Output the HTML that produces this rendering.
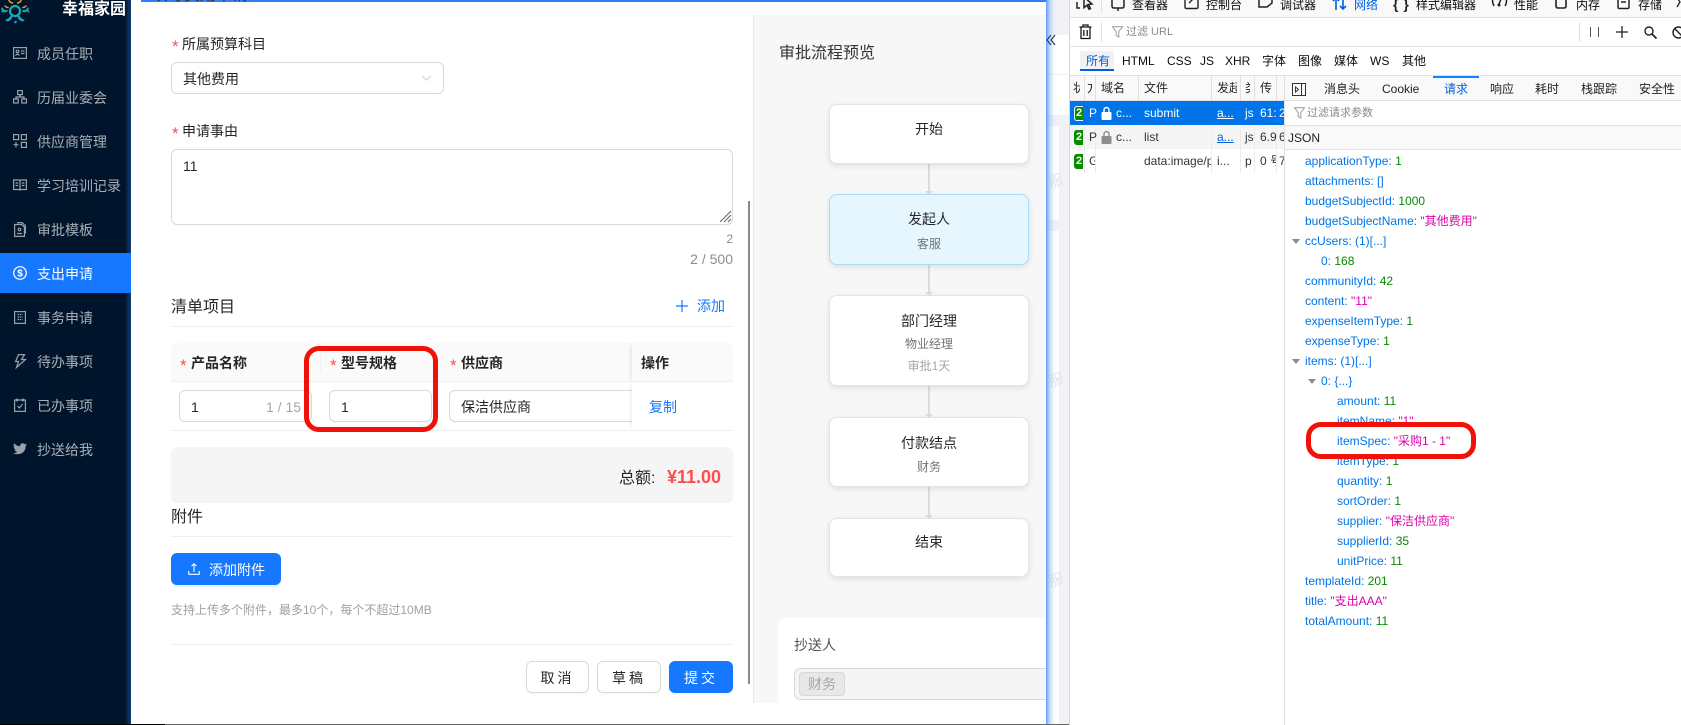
<!DOCTYPE html>
<html lang="zh"><head><meta charset="utf-8"><title>支出申请</title>
<style>
html,body{margin:0;padding:0;width:1681px;height:725px;overflow:hidden;background:#f0f2f5}
body{position:relative;font-family:"Liberation Sans","Noto Sans CJK SC",sans-serif;font-size:14px;color:#262626}
.t{position:absolute;white-space:nowrap;line-height:20px;height:20px}
.b{position:absolute;box-sizing:border-box}
svg{position:absolute;overflow:visible}
.m{color:rgba(255,255,255,.65);left:37px}
.ic{fill:none;stroke:rgba(255,255,255,.6);stroke-width:1.2}
.star{color:#ff4d4f;font-size:17px}
.in{border:1px solid #d9d9d9;border-radius:6px;background:#fff}
.line{background:#f0f0f0;height:1px}
.btn{border:1px solid #d9d9d9;border-radius:6px;background:#fff;text-align:center;line-height:32px;letter-spacing:3px;box-shadow:0 2px 0 rgba(0,0,0,.02)}
.node{border:1px solid #e4e4e4;border-radius:8px;background:#fff;left:829px;width:200px;box-shadow:0 2px 6px rgba(0,0,0,.1)}
.c{text-align:center;left:829px;width:200px}
.conn{background:#dcdcdc;width:2px;left:928px}
.arr{position:absolute;left:925px;width:0;height:0;border-left:4px solid transparent;border-right:4px solid transparent;border-top:4px solid #d9d9d9;z-index:3}
.d{font-size:12px;color:#0c0c0d}
.k{color:#0074e8;font-size:12px}
.n{color:#058b00}.s{color:#dd00a9}
.tri{position:absolute;width:0;height:0;border-left:4px solid transparent;border-right:4px solid transparent;border-top:5px solid #8c8c8c}
.red{position:absolute;box-sizing:border-box;border:5px solid #f01208;z-index:20}
.cell{position:absolute;top:76px;height:25px;width:1px;background:#e0e0e2}
.r{font-size:12px;line-height:24px;height:24px}
</style></head><body>

<!-- background page behind modal -->
<div class="b" style="left:1046px;top:35px;width:23px;height:39px;background:#fff"></div>
<div class="b" style="left:1046px;top:74px;width:23px;height:41px;background:#fff;border-top:1px solid #eee"></div>
<div class="b" style="left:1046px;top:126px;width:13px;height:94px;background:#fff"></div>
<div class="b" style="left:1046px;top:231px;width:13px;height:494px;background:#fff"></div>
<div class="t" style="left:1049px;top:172px;color:#e6e6e6;transform:rotate(-20deg);font-size:15px">服</div>
<div class="t" style="left:1049px;top:371px;color:#e6e6e6;transform:rotate(-20deg);font-size:15px">服</div>
<div class="t" style="left:1049px;top:571px;color:#e6e6e6;transform:rotate(-20deg);font-size:15px">服</div>

<!-- modal -->
<div class="b" style="left:131px;top:0;width:915px;height:724px;background:#fff"></div>
<div class="b" style="left:1046px;top:0;width:10px;height:724px;background:linear-gradient(90deg,#5c9cff,rgba(140,185,255,.55) 35%,rgba(200,225,255,.15) 80%,rgba(255,255,255,0));z-index:2"></div>
<svg style="left:1046px;top:34px;z-index:3" width="10" height="12" viewBox="0 0 10 12"><path d="M5 1L1 6l4 5M9 1L5 6l4 5" fill="none" stroke="#33405c" stroke-width="1.300"/></svg>
<div class="b" style="left:141px;top:0;width:905px;height:2px;background:#2f80f5"></div>

<!-- sidebar -->
<div class="b" style="left:0;top:0;width:131px;height:725px;background:linear-gradient(90deg,#00152b 0,#00152b 125px,#0f3f78 131px)"></div>
<div class="b" style="left:0;top:253px;width:131px;height:40px;background:#1677ff"></div>
<svg style="left:0;top:0" width="32" height="26" viewBox="0 0 32 26"><circle cx="15" cy="11" r="5" fill="none" stroke="#1ba9bb" stroke-width="2.200"/>
<path d="M2 7q2 4 6 3l-1 2q-4 1-6-3zM28 7q-2 4-6 3l1 2q4 1 6-3zM5 20q4-1 6-5l1.500 1.500q-1 4-5 5zM25 20q-4-1-6-5l-1.500 1.500q1 4 5 5z" fill="#1ba9bb"/>
<circle cx="2.500" cy="11.500" r="1" fill="#1ba9bb"/><circle cx="28.500" cy="11.500" r="1" fill="#1ba9bb"/><circle cx="15.500" cy="22" r="1.300" fill="#1ba9bb"/>
<g fill="none" stroke="#e3a21a" stroke-width="1.500" stroke-linecap="round"><path d="M9 0.500q1 2 3.500 2.500M21 0.500q-1 2-3.500 2.500M5 6q1.500 1.500 3 1.500M26 6q-1.500 1.500-3 1.500"/></g></svg>
<div class="t" style="left:62px;top:0;font-size:16px;font-weight:700;color:#fff">幸福家园</div>

<div class="t m" style="top:44px">成员任职</div>
<svg style="left:13px;top:47px" width="14" height="12" class="ic" viewBox="0 0 14 12"><rect x=".6" y=".6" width="12.8" height="10.8"/><circle cx="4.5" cy="4.5" r="1.3"/><path d="M2.500 8.500q2-2.500 4 0M8 4h3.500M8 6.500h3.500"/></svg>
<div class="t m" style="top:88px">历届业委会</div>
<svg style="left:13px;top:90px" width="14" height="14" class="ic" viewBox="0 0 14 14"><rect x="4.7" y=".6" width="4.6" height="4"/><rect x=".6" y="9" width="4.6" height="4"/><rect x="8.8" y="9" width="4.6" height="4"/><path d="M7 4.600v2.400M3 9V7h8v2"/></svg>
<div class="t m" style="top:132px">供应商管理</div>
<svg style="left:13px;top:134px" width="14" height="14" class="ic" viewBox="0 0 14 14"><rect x=".6" y=".6" width="5" height="5"/><rect x="8.4" y=".6" width="5" height="5"/><rect x="8.4" y="8.4" width="5" height="5"/><path d="M3 8v5.500M.5 10.700h5"/></svg>
<div class="t m" style="top:176px">学习培训记录</div>
<svg style="left:13px;top:179px" width="14" height="12" class="ic" viewBox="0 0 14 12"><path d="M.6 1h5.400q1 0 1 1 0-1 1-1h5.400v9.500H8q-1 0-1 1 0-1-1-1H.6zM7 2v9M2.500 4h2.700M2.500 6.500h2.700M8.800 4h2.700M8.800 6.500h2.700"/></svg>
<div class="t m" style="top:220px">审批模板</div>
<svg style="left:14px;top:222px" width="12" height="15" class="ic" viewBox="0 0 12 15"><path d="M.6 2.500h7l2.800 2.500v9.400H.6zM3 .6h5l3.400 3v8"/><circle cx="5.500" cy="7.500" r="1.300"/><path d="M3 11.500h5"/></svg>
<div class="t" style="left:37px;top:264px;color:#fff">支出申请</div>
<svg style="left:13px;top:266px" width="14" height="14" viewBox="0 0 14 14"><circle cx="7" cy="7" r="6.300" fill="none" stroke="#fff" stroke-width="1.200"/><text x="7" y="10.500" text-anchor="middle" font-size="10" font-weight="700" fill="#fff">$</text></svg>
<div class="t m" style="top:308px">事务申请</div>
<svg style="left:14px;top:311px" width="12" height="13" class="ic" viewBox="0 0 12 13"><rect x=".6" y=".6" width="10.800" height="11.800"/><path d="M3.500 3.500h5M3.500 6h5M3.500 8.500h5" stroke-dasharray="1.500 .7"/></svg>
<div class="t m" style="top:352px">待办事项</div>
<svg style="left:15px;top:354px" width="11" height="14" class="ic" viewBox="0 0 11 14"><path d="M3.500.6h6L6.500 5.500h4L1.500 13.500l2-6H.6z"/></svg>
<div class="t m" style="top:396px">已办事项</div>
<svg style="left:14px;top:398px" width="12" height="14" class="ic" viewBox="0 0 12 14"><rect x=".6" y="2" width="10.800" height="11.400"/><path d="M3 .5v3M9 .5v3M3.500 8l2 2 3-4"/></svg>
<div class="t m" style="top:440px">抄送给我</div>
<svg style="left:13px;top:443px" width="14" height="12" viewBox="0 0 14 12"><path d="M14 1.500l-1.600.4 1.300-1.500-1.800.7A2.900 2.900 0 0 0 7 3.300C4.600 3.200 2.500 2 1 .3c-.8 1.400-.4 3 .9 3.900L.6 3.800c0 1.400 1 2.600 2.300 2.900l-1.300.1c.4 1.200 1.400 2 2.700 2-1.200 1-2.700 1.400-4.300 1.300C6 13 13 10 12.600 3z" fill="rgba(255,255,255,.6)"/></svg>
<div class="b" style="left:0;top:724px;width:165px;height:1px;background:#000"></div>
<div class="b" style="left:165px;top:724px;width:904px;height:1px;background:#666"></div>

<!-- modal title clipped -->
<div style="position:absolute;left:141px;top:0;width:300px;height:4px;overflow:hidden;z-index:2"><div class="t" style="left:11px;top:-14px;font-size:16px;color:#333">填写费用申请</div></div>

<!-- form -->
<div class="t star" style="left:172px;top:37px">*</div>
<div class="t" style="left:182px;top:34px">所属预算科目</div>
<div class="b in" style="left:171px;top:62px;width:273px;height:32px"></div>
<div class="t" style="left:183px;top:69px">其他费用</div>
<svg style="left:421px;top:75px" width="11" height="6" viewBox="0 0 12 7"><path d="M1 1l5 5 5-5" fill="none" stroke="#c4c4c4" stroke-width="1"/></svg>

<div class="t star" style="left:172px;top:124px">*</div>
<div class="t" style="left:182px;top:121px">申请事由</div>
<div class="b in" style="left:171px;top:149px;width:562px;height:76px"></div>
<div class="t" style="left:183px;top:156px">11</div>
<svg style="left:718px;top:209px" width="14" height="14" viewBox="0 0 14 14"><path d="M2 13L13 2M6 13l7-7M10 13l3-3" stroke="#666" fill="none"/></svg>
<div class="t" style="left:723px;top:229px;font-size:12px;color:#8c8c8c;width:10px;text-align:right">2</div>
<div class="t" style="left:633px;top:249px;width:100px;text-align:right;color:#8c8c8c;font-size:14px">2 / 500</div>

<div class="t" style="left:171px;top:298px;font-size:16px">清单项目</div>
<div class="b line" style="left:171px;top:326px;width:562px"></div>
<svg style="left:676px;top:300px" width="12" height="12" viewBox="0 0 12 12"><path d="M6 0v12M0 6h12" stroke="#1677ff" stroke-width="1.200"/></svg>
<div class="t" style="left:697px;top:296px;color:#1677ff">添加</div>

<div class="b" style="left:171px;top:343px;width:562px;height:39px;background:#fafafa;border-radius:8px 8px 0 0;border-bottom:1px solid #f0f0f0"></div>
<div class="b" style="left:320px;top:351px;width:1px;height:22px;background:#f0f0f0"></div>
<div class="t star" style="left:180px;top:356px">*</div>
<div class="t" style="left:191px;top:353px;font-weight:700">产品名称</div>
<div class="t star" style="left:330px;top:356px">*</div>
<div class="t" style="left:341px;top:353px;font-weight:700">型号规格</div>
<div class="t star" style="left:450px;top:356px">*</div>
<div class="t" style="left:461px;top:353px;font-weight:700">供应商</div>
<div class="b in" style="left:179px;top:390px;width:133px;height:32px"></div>
<div class="t" style="left:191px;top:397px">1</div>
<div class="t" style="left:266px;top:397px;color:#a6a6a6">1 / 15</div>
<div class="b in" style="left:329px;top:390px;width:103px;height:32px"></div>
<div class="t" style="left:341px;top:397px">1</div>
<div class="b in" style="left:449px;top:390px;width:200px;height:32px"></div>
<div class="t" style="left:461px;top:397px">保洁供应商</div>
<div class="b" style="left:632px;top:343px;width:101px;height:39px;background:#fafafa;box-shadow:-3px 0 4px -2px rgba(0,0,0,.1);border-radius:0 8px 0 0;border-bottom:1px solid #f0f0f0"></div>
<div class="b" style="left:632px;top:382px;width:101px;height:48px;background:#fff;box-shadow:-3px 0 4px -2px rgba(0,0,0,.08)"></div>
<div class="t" style="left:641px;top:353px;font-weight:700">操作</div>
<div class="t" style="left:649px;top:397px;color:#1677ff">复制</div>
<div class="b line" style="left:171px;top:430px;width:562px"></div>

<div class="b" style="left:171px;top:447px;width:562px;height:56px;background:#f5f5f5;border-radius:6px"></div>
<div class="t" style="left:619px;top:469px;font-size:16px">总额:</div>
<div class="t" style="left:667px;top:467px;font-size:18px;font-weight:700;color:#ff4d4f">¥11.00</div>

<div class="t" style="left:171px;top:508px;font-size:16px">附件</div>
<div class="b line" style="left:171px;top:536px;width:562px"></div>
<div class="b" style="left:171px;top:553px;width:110px;height:32px;background:#1677ff;border-radius:6px;box-shadow:0 2px 0 rgba(5,145,255,.1)"></div>
<svg style="left:188px;top:563px" width="12" height="12" viewBox="0 0 12 12"><path d="M6 9V1M3.500 3L6 .8 8.500 3M.8 8v3.300h10.400V8" fill="none" stroke="#fff" stroke-width="1.100"/></svg>
<div class="t" style="left:209px;top:560px;color:#fff">添加附件</div>
<div class="t" style="left:171px;top:600px;font-size:12px;color:#a0a0a0">支持上传多个附件&#65292;最多10个&#65292;每个不超过10MB</div>
<div class="b line" style="left:171px;top:644px;width:562px"></div>
<div class="b btn" style="left:526px;top:661px;width:63px;height:32px">取消</div>
<div class="b btn" style="left:597px;top:661px;width:64px;height:32px">草稿</div>
<div class="b btn" style="left:669px;top:661px;width:64px;height:32px;background:#1677ff;border-color:#1677ff;color:#fff">提交</div>

<!-- scrollbar + approval panel -->
<div class="b" style="left:748px;top:201px;width:2px;height:483px;background:#8a8a8a"></div>
<div class="b" style="left:753px;top:15px;width:293px;height:688px;background:#f7f7f7;border-left:1px solid #e8e8e8"></div>
<div class="t" style="left:779px;top:44px;font-size:16px;color:#333">审批流程预览</div>

<div class="b conn" style="top:163px;height:32px"></div><div class="arr" style="top:191px"></div>
<div class="b conn" style="top:264px;height:32px"></div><div class="arr" style="top:292px"></div>
<div class="b conn" style="top:386px;height:32px"></div><div class="arr" style="top:414px"></div>
<div class="b conn" style="top:487px;height:32px"></div><div class="arr" style="top:515px"></div>
<div class="b node" style="top:104px;height:60px"></div>
<div class="t c" style="top:119px">开始</div>
<div class="b node" style="top:194px;height:71px;background:#e6f6ff;border-color:#a9dcfb"></div>
<div class="t c" style="top:209px">发起人</div>
<div class="t c" style="top:234px;font-size:12px;color:#737373">客服</div>
<div class="b node" style="top:295px;height:91px"></div>
<div class="t c" style="top:311px">部门经理</div>
<div class="t c" style="top:334px;font-size:12px;color:#737373">物业经理</div>
<div class="t c" style="top:356px;font-size:12px;color:#a6a6a6">审批1天</div>
<div class="b node" style="top:417px;height:70px"></div>
<div class="t c" style="top:433px">付款结点</div>
<div class="t c" style="top:457px;font-size:12px;color:#737373">财务</div>
<div class="b node" style="top:518px;height:59px"></div>
<div class="t c" style="top:532px">结束</div>

<div class="b" style="left:778px;top:618px;width:268px;height:85px;background:#fff;border-radius:8px 0 0 0"></div>
<div class="t" style="left:794px;top:635px;color:#555">抄送人</div>
<div class="b" style="left:794px;top:668px;width:252px;height:32px;background:#f5f5f5;border:1px solid #d9d9d9;border-right:0;border-radius:6px 0 0 6px"></div>
<div class="b" style="left:799px;top:672px;width:46px;height:24px;background:#e8e8e8;border:1px solid #d9d9d9;border-radius:4px"></div>
<div class="t" style="left:808px;top:674px;color:#a6a6a6">财务</div>

<!-- devtools -->
<div class="b" style="left:1069px;top:0;width:612px;height:725px;background:#fff;border-left:1px solid #d7d7db"></div>
<div class="b" style="left:1070px;top:0;width:611px;height:18px;background:#f9f9fa;border-bottom:1px solid #e0e0e2"></div>
<svg style="left:1076px;top:-8px" width="18" height="20" viewBox="0 0 18 20"><path d="M1 10v6h3M8 5l8 7-3.500.5 2 4-1.500.7-2-4-3 2.500z" fill="none" stroke="#222" stroke-width="1.500"/></svg>
<div class="b" style="left:1101px;top:0;width:1px;height:13px;background:#e0e0e2"></div>
<svg style="left:1111px;top:-8px" width="14" height="20" viewBox="0 0 14 20"><path d="M1 1v13q0 2 2 2h8q2 0 2-2V1M7 16v3" fill="none" stroke="#222" stroke-width="1.500"/></svg>
<div class="t d" style="left:1132px;top:-5px">查看器</div>
<svg style="left:1184px;top:-8px" width="15" height="18" viewBox="0 0 15 18"><path d="M1 1v14q0 1.500 1.500 1.500h10q1.500 0 1.500-1.500V1M5 5l3 3-3 3" fill="none" stroke="#222" stroke-width="1.400"/></svg>
<div class="t d" style="left:1206px;top:-5px">控制台</div>
<svg style="left:1258px;top:-8px" width="15" height="18" viewBox="0 0 15 18"><path d="M1 1v14h8l5-4V1" fill="none" stroke="#222" stroke-width="1.500"/></svg>
<div class="t d" style="left:1280px;top:-5px">调试器</div>
<svg style="left:1332px;top:-3px" width="16" height="14" viewBox="0 0 16 14"><path d="M4 13V1M1 4l3-3 3 3M11 0v12M8 9l3 3 3-3" fill="none" stroke="#0060df" stroke-width="1.600"/></svg>
<div class="t d" style="left:1354px;top:-5px;color:#0060df">网络</div>
<div class="t" style="left:1393px;top:-6px;font-size:14px;font-weight:700;color:#222;word-spacing:1px">{ }</div>
<div class="t d" style="left:1416px;top:-5px">样式编辑器</div>
<svg style="left:1492px;top:-3px" width="15" height="11" viewBox="0 0 15 11"><path d="M2 9Q-1 3 2 0M13 0q3 4 0 9M9 2L7 7" fill="none" stroke="#222" stroke-width="1.500"/><circle cx="7" cy="8" r="1.500" fill="#222"/></svg>
<div class="t d" style="left:1514px;top:-5px">性能</div>
<svg style="left:1554px;top:-8px" width="14" height="17" viewBox="0 0 14 17"><path d="M2 1v13q0 2 2 2h6q2 0 2-2V1" fill="none" stroke="#222" stroke-width="1.600"/></svg>
<div class="t d" style="left:1576px;top:-5px">内存</div>
<svg style="left:1617px;top:-8px" width="13" height="20" viewBox="0 0 13 20"><path d="M1 1v14q0 1.500 1.500 1.500h8q1.500 0 1.500-1.500V1M4 10h5" fill="none" stroke="#222" stroke-width="1.500"/></svg>
<div class="t d" style="left:1638px;top:-5px">存储</div>
<svg style="left:1676px;top:-2px" width="10" height="10" viewBox="0 0 10 10"><path d="M1 0l3 4-3 5" fill="none" stroke="#222" stroke-width="1.300"/></svg>

<svg style="left:1079px;top:24px" width="13" height="16" viewBox="0 0 13 16"><path d="M.5 3h12M4 3V1h5v2M2 3v11.500h9V3M4.800 6v6M8.200 6v6" fill="none" stroke="#18181a" stroke-width="1.300"/></svg>
<div class="b" style="left:1101px;top:22px;width:1px;height:20px;background:#e0e0e2"></div>
<svg style="left:1112px;top:26px" width="11" height="12" viewBox="0 0 11 12"><path d="M.5 .8h10L6.800 5.500V11l-2.600-1.500v-4z" fill="none" stroke="#9a9a9a"/></svg>
<div class="t d" style="left:1126px;top:22px;color:#8a8a8e;font-size:11px">过滤 URL</div>
<div class="b" style="left:1579px;top:22px;width:1px;height:20px;background:#e0e0e2"></div>
<svg style="left:1590px;top:27px" width="9" height="10" viewBox="0 0 9 10"><path d="M.5 0v10M8.500 0v10" stroke="#555" fill="none"/></svg>
<svg style="left:1616px;top:26px" width="12" height="12" viewBox="0 0 12 12"><path d="M6 0v12M0 6h12" stroke="#222" stroke-width="1.300"/></svg>
<svg style="left:1644px;top:26px" width="13" height="13" viewBox="0 0 13 13"><circle cx="5" cy="5" r="4" fill="none" stroke="#222" stroke-width="1.400"/><path d="M8 8l4.500 4.500" stroke="#222" stroke-width="1.800"/></svg>
<svg style="left:1672px;top:26px" width="13" height="13" viewBox="0 0 13 13"><circle cx="6.500" cy="6.500" r="5.500" fill="none" stroke="#222" stroke-width="1.400"/><path d="M2.500 2.500l8 8" stroke="#222" stroke-width="1.400"/></svg>
<div class="b" style="left:1070px;top:46px;width:611px;height:1px;background:#e0e0e2"></div>

<div class="b" style="left:1080px;top:51px;width:34px;height:20px;background:#f1f1f3;border-bottom:2px solid #0060df"></div>
<div class="t d" style="left:1086px;top:51px;color:#0060df">所有</div>
<div class="t d" style="left:1122px;top:51px">HTML</div>
<div class="t d" style="left:1167px;top:51px">CSS</div>
<div class="t d" style="left:1200px;top:51px">JS</div>
<div class="t d" style="left:1225px;top:51px">XHR</div>
<div class="t d" style="left:1262px;top:51px">字体</div>
<div class="t d" style="left:1298px;top:51px">图像</div>
<div class="t d" style="left:1334px;top:51px">媒体</div>
<div class="t d" style="left:1370px;top:51px">WS</div>
<div class="t d" style="left:1402px;top:51px">其他</div>
<div class="b" style="left:1070px;top:75px;width:611px;height:1px;background:#e0e0e2"></div>

<!-- request table -->
<div class="b" style="left:1070px;top:76px;width:611px;height:25px;background:#f9f9fa;border-bottom:1px solid #e0e0e2"></div>
<div class="cell" style="left:1084px"></div><div class="cell" style="left:1095px"></div><div class="cell" style="left:1138px"></div><div class="cell" style="left:1211px"></div><div class="cell" style="left:1240px"></div><div class="cell" style="left:1254px"></div><div class="cell" style="left:1276px"></div>
<div style="position:absolute;left:1073px;top:76px;width:7px;height:24px;overflow:hidden"><div class="t r" style="left:0;color:#222">状</div></div>
<div style="position:absolute;left:1087px;top:76px;width:5px;height:24px;overflow:hidden"><div class="t r" style="left:0;color:#222">方</div></div>
<div class="t r" style="left:1101px;top:76px">域名</div>
<div class="t r" style="left:1144px;top:76px">文件</div>
<div style="position:absolute;left:1217px;top:76px;width:20px;height:24px;overflow:hidden"><div class="t r" style="left:0">发起</div></div>
<div style="position:absolute;left:1245px;top:76px;width:5px;height:24px;overflow:hidden"><div class="t r" style="left:0">类</div></div>
<div class="t r" style="left:1260px;top:76px">传</div>

<div class="b" style="left:1070px;top:101px;width:214px;height:24px;background:#0074e8"></div>
<div class="b" style="left:1070px;top:125px;width:214px;height:24px;background:#f5f5f6"></div>
<div class="b" style="left:1084px;top:125px;width:1px;height:48px;background:#ececee"></div>
<div class="b" style="left:1095px;top:125px;width:1px;height:48px;background:#ececee"></div>
<div class="b" style="left:1211px;top:125px;width:1px;height:48px;background:#ececee"></div>
<div class="b" style="left:1240px;top:125px;width:1px;height:48px;background:#ececee"></div>
<div class="b" style="left:1254px;top:125px;width:1px;height:48px;background:#ececee"></div>
<div class="b" style="left:1276px;top:125px;width:1px;height:48px;background:#ececee"></div>

<div class="b" style="left:1074px;top:106px;width:9px;height:15px;background:#058b00;border:1px solid #fff;border-radius:3px 0 0 3px;border-right:0;overflow:hidden;color:#fff;font-size:11px;line-height:13px;font-weight:700;padding-left:1px">2</div>
<div class="t r" style="left:1089px;top:101px;color:#fff">P</div>
<svg style="left:1101px;top:106px" width="11" height="14" viewBox="0 0 11 14"><path d="M3 6V4a2.500 2.500 0 0 1 5 0v2" fill="none" stroke="#fff" stroke-width="1.400"/><rect x=".5" y="6" width="10" height="8" rx="1" fill="#fff"/></svg>
<div class="t r" style="left:1116px;top:101px;color:#fff">c...</div>
<div class="t r" style="left:1144px;top:101px;color:#fff">submit</div>
<div class="t r" style="left:1217px;top:101px;color:#fff;text-decoration:underline">a...</div>
<div class="t r" style="left:1245px;top:101px;color:#fff">js</div>
<div class="t r" style="left:1260px;top:101px;color:#fff;width:17px;overflow:hidden">61:</div>
<div class="t r" style="left:1279px;top:101px;color:#fff;width:5px;overflow:hidden">2</div>

<div class="b" style="left:1074px;top:130px;width:9px;height:15px;background:#058b00;border-radius:3px 0 0 3px;overflow:hidden;color:#fff;font-size:11px;line-height:15px;font-weight:700;padding-left:2px">2</div>
<div class="t r" style="left:1089px;top:125px;color:#333">P</div>
<svg style="left:1101px;top:130px" width="11" height="14" viewBox="0 0 11 14"><path d="M3 6V4a2.500 2.500 0 0 1 5 0v2" fill="none" stroke="#8e8e8e" stroke-width="1.400"/><rect x=".5" y="6" width="10" height="8" rx="1" fill="#8e8e8e"/></svg>
<div class="t r" style="left:1116px;top:125px;color:#333">c...</div>
<div class="t r" style="left:1144px;top:125px;color:#333">list</div>
<div class="t r" style="left:1217px;top:125px;color:#0060df;text-decoration:underline">a...</div>
<div class="t r" style="left:1245px;top:125px;color:#333">js</div>
<div class="t r" style="left:1260px;top:125px;color:#333">6.9</div>
<div class="t r" style="left:1279px;top:125px;color:#333;width:5px;overflow:hidden">6</div>

<div class="b" style="left:1074px;top:154px;width:9px;height:15px;background:#058b00;border-radius:3px 0 0 3px;overflow:hidden;color:#fff;font-size:11px;line-height:15px;font-weight:700;padding-left:2px">2</div>
<div class="t r" style="left:1089px;top:149px;color:#333;width:6px;overflow:hidden">G</div>
<div class="t r" style="left:1144px;top:149px;color:#333;width:67px;overflow:hidden">data:image/png</div>
<div class="t r" style="left:1217px;top:149px;color:#333">i...</div>
<div class="t r" style="left:1245px;top:149px;color:#333">p</div>
<div class="t r" style="left:1260px;top:149px;color:#333;width:16px;overflow:hidden">0 号</div>
<div class="t r" style="left:1279px;top:149px;color:#333;width:5px;overflow:hidden">7</div>

<!-- details panel -->
<div class="b" style="left:1284px;top:76px;width:397px;height:649px;background:#fff;border-left:1px solid #e0e0e2"></div>
<div class="b" style="left:1285px;top:76px;width:396px;height:25px;background:#f9f9fa;border-bottom:1px solid #e0e0e2"></div>
<div class="b" style="left:1433px;top:76px;width:46px;height:2px;background:#0a84ff"></div>
<svg style="left:1292px;top:83px" width="14" height="13" viewBox="0 0 14 13"><rect x=".5" y=".5" width="13" height="12" fill="none" stroke="#333"/><path d="M9.500 0v13M3.500 4l3 2.500-3 2.500z" fill="none" stroke="#333"/></svg>
<div class="t r" style="left:1324px;top:77px;color:#222">消息头</div>
<div class="t r" style="left:1382px;top:77px;color:#222">Cookie</div>
<div class="t r" style="left:1444px;top:77px;color:#0060df">请求</div>
<div class="t r" style="left:1490px;top:77px;color:#222">响应</div>
<div class="t r" style="left:1535px;top:77px;color:#222">耗时</div>
<div class="t r" style="left:1581px;top:77px;color:#222">栈跟踪</div>
<div class="t r" style="left:1639px;top:77px;color:#222">安全性</div>

<svg style="left:1294px;top:107px" width="11" height="12" viewBox="0 0 11 12"><path d="M.5 .8h10L6.800 5.500V11l-2.600-1.500v-4z" fill="none" stroke="#9a9a9a"/></svg>
<div class="t r" style="left:1307px;top:101px;color:#8a8a8e;font-size:11px">过滤请求参数</div>
<div class="b" style="left:1285px;top:125px;width:396px;height:25px;background:#f9f9fa;border-top:1px solid #e0e0e2;border-bottom:1px solid #e0e0e2"></div>
<div class="t r" style="left:1288px;top:126px;color:#222">JSON</div>

<div class="t k" style="left:1305px;top:151px">applicationType: <span class="n">1</span></div>
<div class="t k" style="left:1305px;top:171px">attachments: []</div>
<div class="t k" style="left:1305px;top:191px">budgetSubjectId: <span class="n">1000</span></div>
<div class="t k" style="left:1305px;top:211px">budgetSubjectName: <span class="s">"其他费用"</span></div>
<div class="tri" style="left:1292px;top:239px"></div>
<div class="t k" style="left:1305px;top:231px">ccUsers: (1)[...]</div>
<div class="t k" style="left:1321px;top:251px">0: <span class="n">168</span></div>
<div class="t k" style="left:1305px;top:271px">communityId: <span class="n">42</span></div>
<div class="t k" style="left:1305px;top:291px">content: <span class="s">"11"</span></div>
<div class="t k" style="left:1305px;top:311px">expenseItemType: <span class="n">1</span></div>
<div class="t k" style="left:1305px;top:331px">expenseType: <span class="n">1</span></div>
<div class="tri" style="left:1292px;top:359px"></div>
<div class="t k" style="left:1305px;top:351px">items: (1)[...]</div>
<div class="tri" style="left:1308px;top:379px"></div>
<div class="t k" style="left:1321px;top:371px">0: {...}</div>
<div class="t k" style="left:1337px;top:391px">amount: <span class="n">11</span></div>
<div class="t k" style="left:1337px;top:411px">itemName: <span class="s">"1"</span></div>
<div class="t k" style="left:1337px;top:431px">itemSpec: <span class="s">"采购1 - 1"</span></div>
<div class="t k" style="left:1337px;top:451px">itemType: <span class="n">1</span></div>
<div class="t k" style="left:1337px;top:471px">quantity: <span class="n">1</span></div>
<div class="t k" style="left:1337px;top:491px">sortOrder: <span class="n">1</span></div>
<div class="t k" style="left:1337px;top:511px">supplier: <span class="s">"保洁供应商"</span></div>
<div class="t k" style="left:1337px;top:531px">supplierId: <span class="n">35</span></div>
<div class="t k" style="left:1337px;top:551px">unitPrice: <span class="n">11</span></div>
<div class="t k" style="left:1305px;top:571px">templateId: <span class="n">201</span></div>
<div class="t k" style="left:1305px;top:591px">title: <span class="s">"支出AAA"</span></div>
<div class="t k" style="left:1305px;top:611px">totalAmount: <span class="n">11</span></div>

<!-- annotations -->
<div class="red" style="left:304px;top:346px;width:134px;height:86px;border-radius:15px"></div>
<div class="red" style="left:1306px;top:422px;width:170px;height:37px;border-radius:15px"></div>
</body></html>
